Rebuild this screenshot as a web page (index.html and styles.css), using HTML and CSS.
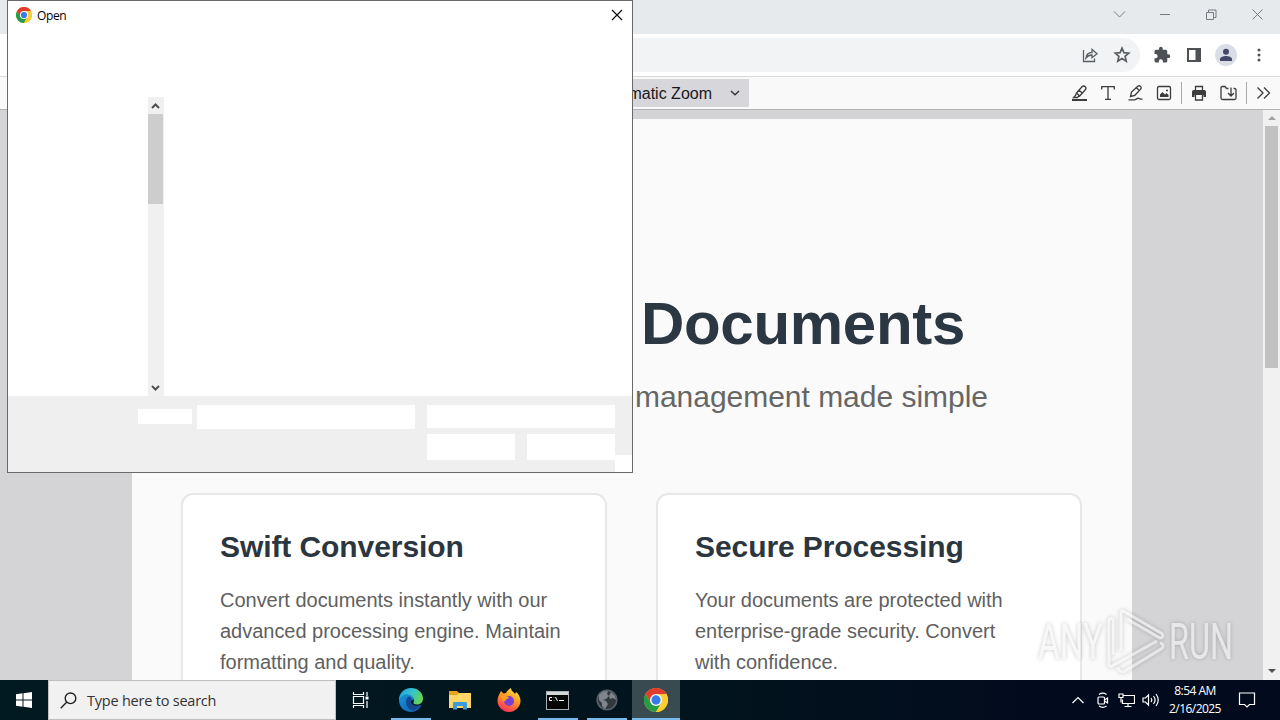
FILE: index.html
```html
<!DOCTYPE html>
<html lang="en">
<head>
  <meta charset="UTF-8">
  <meta name="viewport" content="width=device-width, initial-scale=1.0">
  <title>Open</title>
  <link rel="stylesheet" href="styles.css">
</head>
<body>

  <div class="desktop">
    <!-- Browser window -->
    <div class="titlebar">
      <svg width="46" height="28" viewBox="0 0 46 28"><path d="M17 11.500l5.500 5.500 5.500-5.500"/></svg>
      <svg width="46" height="28" viewBox="0 0 46 28"><path d="M17 14.500h10"/></svg>
      <svg width="46" height="28" viewBox="0 0 46 28"><path d="M17.500 12.500h7v7h-7zM19.500 12.500v-2.500h7.500v7.500h-2.500"/></svg>
      <svg width="46" height="28" viewBox="0 0 46 28"><path d="M17.500 9.500l10 10M27.500 9.500l-10 10"/></svg>
    </div>

    <div class="address-row">
      <div class="address-bar">
        <svg width="18" height="18" viewBox="0 0 18 18"><path class="line" d="M2.500 4v11.500h11v-3M5 12c.5-4 3-5.500 6-5.500V3.500l5 4.200-5 4V9C8.500 9 6.500 10 5 12z"/></svg>
        <svg width="18" height="18" viewBox="0 0 18 18"><path class="star" d="M9 2.200l1.900 4.500 4.800.4-3.600 3.200 1.100 4.800L9 12.500l-4.200 2.600 1.100-4.800-3.600-3.200 4.800-.4z"/></svg>
      </div>
      <svg class="puzzle" width="18" height="18" viewBox="0 0 24 24"><path d="M20.500 11H19V7a2 2 0 0 0-2-2h-4V3.500a2.500 2.500 0 0 0-5 0V5H4a2 2 0 0 0-2 2v3.800h1.500a2.700 2.700 0 0 1 0 5.400H2V20a2 2 0 0 0 2 2h3.800v-1.500a2.700 2.700 0 0 1 5.400 0V22H17a2 2 0 0 0 2-2v-4h1.500a2.500 2.500 0 0 0 0-5z"/></svg>
      <svg class="panel" width="14" height="14" viewBox="0 0 14 14"><path fill-rule="evenodd" d="M0 0h14v14H0zM2 2v10h6.500V2z"/></svg>
      <div class="avatar">
        <svg width="14" height="14" viewBox="0 0 14 14"><circle cx="7" cy="3.700" r="3"/><path d="M1 13v-2c0-2 3.500-3 6-3s6 1 6 3v2z"/></svg>
      </div>
      <svg class="dots" width="4" height="14" viewBox="0 0 4 14"><circle cx="2" cy="2" r="1.500"/><circle cx="2" cy="7" r="1.500"/><circle cx="2" cy="12" r="1.500"/></svg>
    </div>

    <div class="pdf-toolbar">
      <div class="zoom-select">
        <span>Automatic Zoom</span>
        <svg width="10" height="6" viewBox="0 0 10 6"><path d="M1 1l4 3.800L9 1"/></svg>
      </div>
      <div class="tools">
        <svg width="16" height="16" viewBox="0 0 16 16"><path d="M0 15h15" stroke-width="2"/><path d="M4.500 8l5.500-6.200c1-1 2.500-.8 3.300 0s.9 2 0 3L7.700 11zM4.500 8l-.8 2.200L1.500 12.500h4l1-1.200 1.200-.3M7 5.200l3.500 3"/></svg>
        <svg width="16" height="16" viewBox="0 0 16 16"><path d="M1.700 4.500V1.700h12.600v2.800M8 2v12.300M5 14.300h6"/></svg>
        <svg width="16" height="16" viewBox="0 0 16 16"><path d="M2.500 11.500l1-4.500L9.500 1.500c1-1 2.200-.9 3-.1s.9 2 0 3L6.800 10.300zM8.500 2.800l3 3M.5 14.800h6c2 0 2-2 4-1.500s2 1.200 4 .8"/></svg>
        <svg width="16" height="16" viewBox="0 0 16 16"><rect x="1.500" y="1.500" width="13" height="13" rx="1.500"/><path class="solid" d="M4 12V9.500L6.500 7 9 9.500 10.500 8l2 2v2z"/><circle class="solid" cx="11" cy="5.500" r="1"/></svg>
        <span class="separator"></span>
        <svg width="16" height="16" viewBox="0 0 16 16"><path class="solid" d="M3 5h10c1.300 0 2 .8 2 2v5h-2.500v-2h-9v2H1V7c0-1.200.7-2 2-2z"/><path d="M4.500 5V1.500h7V5M4.500 10v5h7v-5"/></svg>
        <svg width="18" height="16" viewBox="0 0 18 16"><path d="M7.500 3.500L6 1.500H3.500C2.500 1.500 2 2 2 3v10c0 1 .5 1.500 1.500 1.500h12c1 0 1.500-.5 1.500-1.500V5c0-1-.5-1.500-1.500-1.500h-1M7.500 3.500h2M12 2.500v8M9 8l3 3 3-3"/></svg>
        <span class="separator"></span>
        <svg width="16" height="16" viewBox="0 0 16 16"><path d="M1.500 2.500L7 8l-5.500 5.500M8 2.500L13.500 8 8 13.500"/></svg>
      </div>
    </div>

    <!-- PDF page -->
    <div class="viewer">
      <div class="page">
        <h1>Documents</h1>
        <p class="subtitle">management made simple</p>
        <div class="cards">
          <div class="card">
            <h2>Swift Conversion</h2>
            <p>Convert documents instantly with our<br>advanced processing engine. Maintain<br>formatting and quality.</p>
          </div>
          <div class="card">
            <h2>Secure Processing</h2>
            <p>Your documents are protected with<br>enterprise-grade security. Convert<br>with confidence.</p>
          </div>
        </div>
      </div>
      <div class="scrollbar">
        <span class="arrow up"></span>
        <span class="thumb"></span>
        <span class="arrow down"></span>
      </div>
    </div>

    <!-- Taskbar -->
    <div class="taskbar">
      <div class="start">
        <svg width="16" height="16" viewBox="0 0 16 16"><path fill="#fff" d="M0 2.200l6.500-.9v6.200H0zM7.500 1.200L16 0v7.500H7.500zM0 8.500h6.500v6.200L0 13.800zM7.500 8.500H16V16l-8.500-1.200z"/></svg>
      </div>
      <div class="search">
        <svg width="17" height="17" viewBox="0 0 17 17"><circle cx="10.500" cy="6.300" r="5.300"/><path d="M6.600 10.200L.7 16.200"/></svg>
        <span>Type here to search</span>
      </div>
      <div class="task">
        <svg width="18" height="16" viewBox="0 0 18 16" fill="none" stroke="#fff" stroke-width="1.200"><path d="M1.500 0v2.500h10V0M1.500 4.500h10v7h-10zM1.500 16v-2.500h10V16M15 0v4M15 9v7"/><path d="M13.500 4.500h3v3h-3z" fill="#fff" stroke="none"/></svg>
      </div>
      <div class="task running edge">
        <svg width="24" height="24" viewBox="0 0 24 24">
          <defs>
            <linearGradient id="edgeTop" x1="0" y1="0" x2="1" y2=".4"><stop offset="0" stop-color="#1b9de2"/><stop offset=".55" stop-color="#35c1cf"/><stop offset="1" stop-color="#5fd35b"/></linearGradient>
            <linearGradient id="edgeLow" x1="0" y1="0" x2="1" y2="1"><stop offset="0" stop-color="#1793dd"/><stop offset="1" stop-color="#125aa5"/></linearGradient>
          </defs>
          <path fill="url(#edgeLow)" d="M0 12C0 7 4 5.500 8 6c5 .5 7 3 6 6-1.500-.5-3 1-2 3 1.500 3 6 4 10.500 2C20 22 16 24 12 24 5 24 0 19 0 12z"/>
          <path fill="#15488e" d="M9 9c-3 3-2.500 9 1.500 12 3 2 8 1 11.500-4-4 1.500-8 1-10-2-1-1.500-.5-3 .5-3.500C13 10 11 8 9 9z"/>
          <path fill="url(#edgeTop)" d="M0 12C0 5 5 0 12 0c7 0 12 5 12 10.500 0 4-3 6-6 6-2.500 0-4-.8-3.500-2C16 11 13 6.500 8 6.500 4 6.500 1 9 0 12z"/>
        </svg>
      </div>
      <div class="task">
        <svg width="22" height="20" viewBox="0 0 22 20"><path fill="#e8a51c" d="M0 1h8l2 2h12v4H0z"/><path fill="#ffd667" d="M0 5h8l2-2h12v15H0z"/><path fill="#3c9bdb" d="M4 19.500v-6c0-1 .5-1.500 1.500-1.500h11c1 0 1.500.5 1.500 1.500v6h-4V16H8v3.500z"/></svg>
      </div>
      <div class="task">
        <svg width="24" height="24" viewBox="0 0 24 24">
          <defs><linearGradient id="fox" x1=".8" y1="0" x2=".3" y2="1"><stop offset="0" stop-color="#ffe84a"/><stop offset=".45" stop-color="#ff9a1f"/><stop offset="1" stop-color="#ff2b5f"/></linearGradient></defs>
          <path fill="url(#fox)" d="M3 5l1-2 2.500 2.500L9 5c1-2 3-4 5-5 0 3 3 4 4 6l1-2c3 2 4.500 6 4.500 9C23.500 19 18 24 12 24S.5 19 .5 13c0-3 1-6 2.500-8z"/>
          <circle cx="12" cy="13" r="5" fill="#7a3fd0"/>
          <path fill="#ff9d22" d="M4 8c3-2 6-1 8 2l-3 1.500c0 2-2 2-4 1z"/>
        </svg>
      </div>
      <div class="task running">
        <svg width="23" height="19" viewBox="0 0 23 19"><rect x=".5" y=".5" width="22" height="18" fill="#050505" stroke="#aab0b3"/><path fill="#d5d8da" d="M1 1h21v3H1z"/><path d="M6 6.500H3.500v3H6M8 6.500v.5M8 9v.5M9.500 6l2 4M13 9.500h5" fill="none" stroke="#fff"/></svg>
      </div>
      <div class="task running">
        <svg width="22" height="22" viewBox="0 0 22 22"><circle cx="11" cy="11" r="9.800" fill="#33383e" stroke="#596069" stroke-width="1.600"/><path fill="#7e858d" d="M3 6l4-3.500 5-.5-1 3 2 2-3 3-3 1 3 1 2 3-3 5-3-3v-3L3 11zM15 3l4 4 1 4-3-2-3 1-1-3z"/></svg>
      </div>
      <div class="task running active">
        <svg width="24" height="24" viewBox="0 0 48 48"><use href="#chrome"/></svg>
      </div>
      <div class="tray">
        <svg width="12" height="16" viewBox="0 0 12 16"><path d="M.5 11l5.500-5.500L11.500 11"/></svg>
        <svg width="14" height="16" viewBox="0 0 14 16"><rect x="2" y="5" width="6.500" height="7" rx="1"/><path d="M8.500 8l3-2v5l-3-2M3 2.500c2.500-1.800 5-1.800 7.500 0M3 14c2.500 1.800 5 1.800 7.500 0"/></svg>
        <svg width="17" height="16" viewBox="0 0 17 16"><path d="M5.500 3.500h11v8H4.500V7.500M10 11.500v3M6.500 14.500h7M1 2h4v3.500H1zM3 5.500v5"/></svg>
        <svg width="18" height="16" viewBox="0 0 18 16"><path d="M1 6v4h2.500l3 3V3l-3 3zM9 6c1 1.300 1 2.700 0 4M11.500 4c2 2.500 2 5.500 0 8M14 2c3 4 3 8 0 12"/></svg>
        <div class="clock"><span>8:54 AM</span><span>2/16/2025</span></div>
        <svg class="notify" width="18" height="18" viewBox="0 0 18 18"><path d="M1.500 2h15v11.500h-5L9 16l-2.500-2.500h-5z"/></svg>
      </div>
    </div>

    <!-- Open file dialog -->
    <div class="dialog">
      <div class="dialog-title">
        <svg width="16" height="16" viewBox="0 0 48 48">
          <defs>
            <g id="chrome">
              <circle cx="24" cy="24" r="24" fill="#fc3"/>
              <path fill="#e33b2e" d="M3.200 12A24 24 0 0 1 44.800 12H24L13.600 30z"/>
              <path fill="#269c47" d="M3.200 12A24 24 0 0 0 24 48L34.400 30 24 35 13.600 30z"/>
              <path fill="#fc3" d="M44.800 12A24 24 0 0 1 24 48L34.400 30 34 18 24 12z"/>
              <circle cx="24" cy="24" r="12" fill="#fff"/>
              <circle cx="24" cy="24" r="9.300" fill="#367bea"/>
            </g>
          </defs>
          <use href="#chrome"/>
        </svg>
        <span>Open</span>
        <svg class="close" width="12" height="12" viewBox="0 0 12 12"><path d="M1 1l10 10M11 1L1 11"/></svg>
      </div>
      <div class="dialog-body">
        <div class="tree-scroll">
          <svg width="9" height="6" viewBox="0 0 9 6"><path d="M1 5l3.500-3.500L8 5"/></svg>
          <span class="tree-thumb"></span>
          <svg width="9" height="6" viewBox="0 0 9 6"><path d="M1 1l3.500 3.500L8 1"/></svg>
        </div>
      </div>
      <div class="dialog-footer">
        <span class="label"></span>
        <span class="filename"></span>
        <div class="buttons">
          <span class="filetype"></span>
          <span class="btn"></span>
          <span class="btn"></span>
        </div>
        <span class="grip"></span>
      </div>
    </div>

    <!-- Watermark -->
    <svg class="watermark" width="210" height="72" viewBox="0 0 210 72">
      <text x="8" y="54" textLength="65" lengthAdjust="spacingAndGlyphs">ANY</text>
      <g class="play">
        <path d="M83 50V15c0-3-4-2-4 1v43c0 2 1 3 3 2l45-25"/>
        <path d="M91 46V9c0-3 1-4 4-2l36 21c3 2 2 5-1 5L97 14"/>
        <path d="M88 62c0 4 4 6 7 4l36-22c3-2 3-5-1-6"/>
      </g>
      <text x="139" y="54" textLength="64" lengthAdjust="spacingAndGlyphs">RUN</text>
    </svg>
  </div>

</body>
</html>
```
FILE: styles.css
```css
* {
  box-sizing: border-box;
}
body {
  margin: 0;
  font-family: 'Liberation Sans', Arial, sans-serif;
}
svg {
  flex: none;
  display: block;
}
.desktop {
  width: 1280px;
  height: 720px;
  position: relative;
  overflow: hidden;
  display: flex;
  flex-direction: column;
}

/* Browser */
.titlebar {
  height: 34px;
  background: #e7eaed;
  display: flex;
  justify-content: flex-end;
}
.titlebar svg {
  fill: none;
  stroke: #777b80;
  margin: 0 -0.500px 0 0.500px;
}
.address-row {
  height: 43px;
  background: #fff;
  border-bottom: 1px solid #d8d9db;
  display: flex;
  align-items: center;
  padding: 0 19px 0 100px;
}
.address-bar {
  flex: 1;
  height: 34px;
  border-radius: 17px;
  background: #f1f3f5;
  display: flex;
  align-items: center;
  justify-content: flex-end;
  gap: 14px;
  padding-right: 9px;
  margin-right: 13px;
}
.line, .star {
  fill: none;
  stroke: #5b5f64;
  stroke-width: 1.300;
}
.star {
  stroke-width: 1.700;
}
.puzzle, .panel, .dots {
  fill: #4d5156;
}
.puzzle {
  margin-right: 16px;
}
.avatar {
  width: 22px;
  height: 22px;
  border-radius: 50%;
  background: #d9dde6;
  display: flex;
  align-items: center;
  justify-content: center;
  fill: #44486a;
  margin: 0 20px 0 14px;
}
.pdf-toolbar {
  height: 33px;
  background: #f9f9fa;
  border-bottom: 1px solid #b4b4b6;
  display: flex;
  align-items: center;
  justify-content: space-between;
  padding: 0 8px 0 580px;
}
.zoom-select {
  width: 169px;
  height: 28px;
  background: #d7d7db;
  display: flex;
  align-items: center;
  justify-content: flex-end;
  gap: 18px;
  padding-right: 9px;
  font-size: 16px;
  line-height: 20px;
  color: #18181c;
}
.zoom-select span {
  padding-top: 1px;
}
.zoom-select svg {
  fill: none;
  stroke: #333;
  stroke-width: 1.400;
}
.tools {
  display: flex;
  align-items: center;
  gap: 12px;
}
.tools svg {
  fill: none;
  stroke: #3c3c3f;
  stroke-width: 1.300;
}
.tools svg:nth-child(-n+4) {
  margin: 0 0.250px 0 -0.250px;
}
.tools .solid {
  fill: #3c3c3f;
  stroke: none;
}
.separator {
  width: 1px;
  height: 22px;
  background: #a9a9ab;
  margin: 0 -3px;
}

/* PDF viewer */
.viewer {
  height: 570px;
  background: #d4d4d7;
  display: flex;
  justify-content: space-between;
  overflow: hidden;
}
.page {
  width: 1000px;
  margin: 9px 0 0 132px;
  padding: 170px 49px 0;
  background: #fafafa;
}
.page h1 {
  margin: 0;
  padding-right: 118px;
  font-size: 60px;
  line-height: 70px;
  letter-spacing: -0.300px;
  text-align: right;
  color: #2b3843;
}
.subtitle {
  margin: 20px 0 0;
  padding-right: 95px;
  font-size: 30px;
  line-height: 36px;
  letter-spacing: -0.020px;
  text-align: right;
  color: #666;
}
.cards {
  display: flex;
  gap: 49px;
  margin-top: 78px;
}
.card {
  width: 426px;
  height: 260px;
  flex: none;
  padding: 34px 37px;
  border: 2px solid #e7e7e7;
  border-radius: 12px;
  background: #fff;
}
.card h2 {
  margin: 0;
  font-size: 30px;
  line-height: 36px;
  letter-spacing: -0.080px;
  color: #2b3640;
}
.card p {
  margin: 20px 0 0;
  font-size: 20px;
  line-height: 31px;
  letter-spacing: -0.020px;
  white-space: nowrap;
  color: #606060;
}
.scrollbar {
  width: 17px;
  background: #f1f1f1;
  display: flex;
  flex-direction: column;
  align-items: center;
}
.arrow {
  border: 4px solid transparent;
}
.arrow.up {
  border-top: 0;
  border-bottom-color: #a3a3a3;
  margin: 6px 0;
}
.arrow.down {
  border-bottom: 0;
  border-top-color: #505050;
  margin: auto 0 7px;
}
.thumb {
  width: 13px;
  height: 242px;
  background: #c1c1c1;
}

/* Taskbar */
.taskbar {
  height: 40px;
  background: linear-gradient(90deg, #011920 0, #02141d 55%, #020b1d 80%, #020a1d 100%);
  display: flex;
  font-family: 'Open Sans', 'Noto Sans', sans-serif;
}
.start {
  width: 48px;
  display: flex;
  align-items: center;
  justify-content: center;
}
.search {
  width: 288px;
  background: #f1f1f1;
  border: 1px solid #bfbfbf;
  display: flex;
  align-items: center;
  gap: 10px;
  padding-left: 11px;
  font-size: 14.500px;
  letter-spacing: -0.220px;
  color: #333;
}
.search svg {
  fill: none;
  stroke: #222;
  stroke-width: 1.400;
}
.task {
  width: 49px;
  display: flex;
  align-items: center;
  justify-content: center;
}
.running {
  background: linear-gradient(#76b9ed, #76b9ed) center bottom / 40px 2px no-repeat;
}
.edge {
  margin-left: 1px;
}
.active {
  width: 48px;
  margin-left: 1px;
  background-color: #394a50;
  background-size: 48px 2px;
}
.tray {
  margin-left: auto;
  display: flex;
  align-items: center;
  padding-right: 24px;
}
.tray svg {
  fill: none;
  stroke: #fff;
  stroke-width: 1.200;
  margin-right: 10px;
}
.tray svg:first-child {
  margin-right: 12px;
}
.tray svg:nth-child(2) {
  margin-right: 8px;
}
.tray svg:nth-child(3) {
  margin-right: 7px;
}
.tray .clock {
  width: 52px;
  margin-right: 17px;
  margin-left: -1px;
  display: flex;
  flex-direction: column;
  align-items: center;
  font-size: 12px;
  line-height: 18px;
  letter-spacing: -0.550px;
  white-space: nowrap;
  color: #fff;
}
.tray .notify {
  margin-right: 0;
}

/* Open dialog */
.dialog {
  position: absolute;
  left: 7px;
  top: 0;
  width: 626px;
  height: 473px;
  border: 1px solid #69696b;
  background: #fff;
  display: flex;
  flex-direction: column;
}
.dialog-title {
  height: 28px;
  display: flex;
  align-items: center;
  gap: 5px;
  padding: 0 9px 0 8px;
  font: 12px 'Open Sans', 'Noto Sans', sans-serif;
  letter-spacing: -0.350px;
  color: #000;
}
.close {
  margin-left: auto;
  fill: none;
  stroke: #111;
  stroke-width: 1.200;
}
.dialog-body {
  flex: 1;
  padding: 68px 0 0 140px;
}
.tree-scroll {
  width: 16px;
  height: 100%;
  background: #f0f0f0;
  display: flex;
  flex-direction: column;
  align-items: center;
  padding: 6px 1px 5px 0;
}
.tree-scroll svg {
  fill: none;
  stroke: #505050;
  stroke-width: 2;
}
.tree-thumb {
  width: 15px;
  height: 90px;
  margin: 5px 0 auto;
  background: #cdcdcd;
}
.dialog-footer {
  height: 76px;
  background: #efefef;
  display: flex;
  align-items: flex-start;
  padding: 9px 0 0 130px;
}
.dialog-footer span {
  background: #fff;
}
.label {
  width: 54px;
  height: 15px;
  margin: 4px 5px 0 0;
}
.filename {
  width: 218px;
  height: 24px;
  margin-right: 12px;
}
.buttons {
  width: 188px;
  display: grid;
  grid-template-columns: 88px 88px;
  gap: 6px 12px;
}
.filetype {
  grid-column: span 2;
  height: 23px;
}
.btn {
  height: 26px;
}
.grip {
  width: 17px;
  height: 17px;
  align-self: flex-end;
}

/* Watermark sits over the page and the viewer background */
.watermark {
  position: absolute;
  left: 1030px;
  top: 605px;
  overflow: visible;
  filter: drop-shadow(0 0 2px rgba(0, 0, 0, 0.350));
  opacity: 0.600;
}
.watermark text {
  font-family: Roboto, sans-serif;
  font-size: 50px;
  font-weight: 400;
  fill: #f4f4f4;
}
.play {
  fill: none;
  stroke: #f4f4f4;
  stroke-width: 3;
}
```
